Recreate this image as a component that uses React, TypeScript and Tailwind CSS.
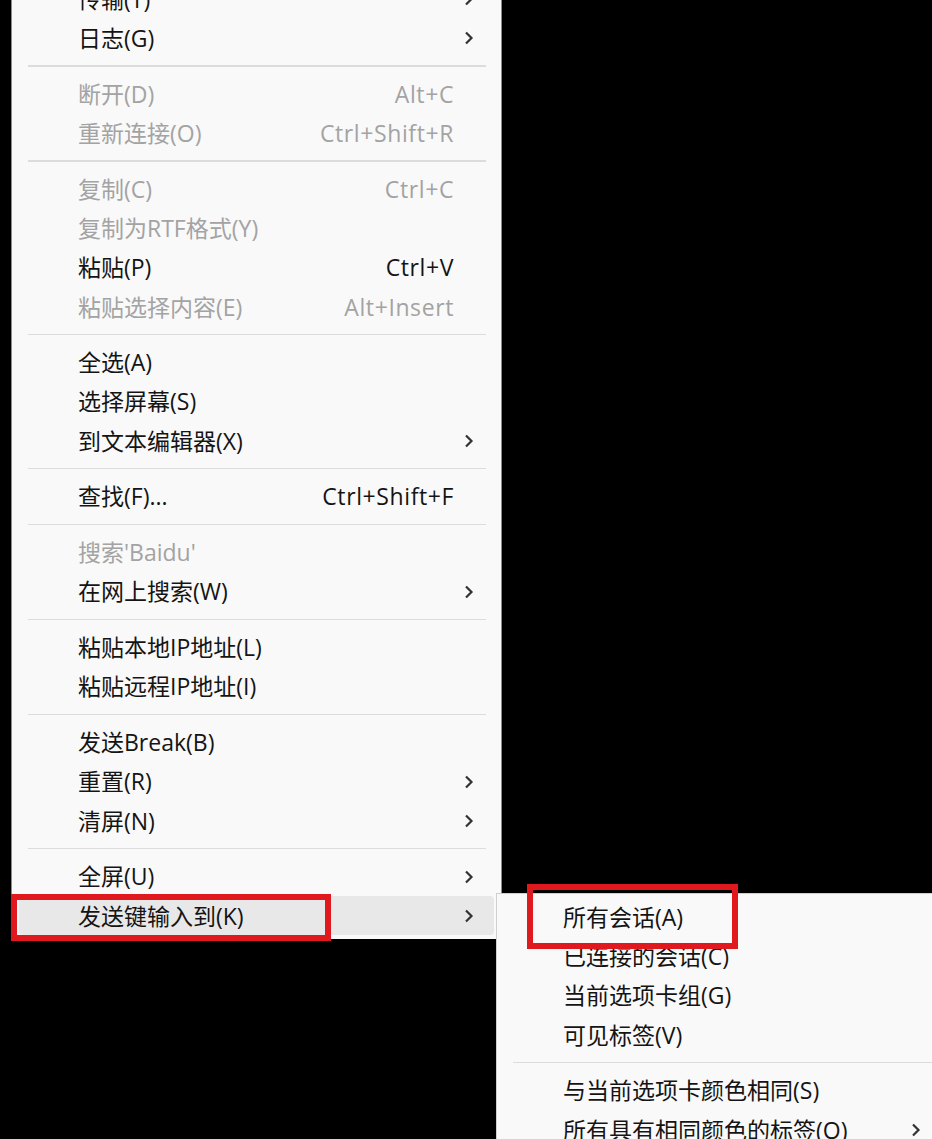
import React from "react";

type Item =
  | { sep: true }
  | { sep?: false; label: string; shortcut?: string; sub?: boolean; disabled?: boolean; active?: boolean };

const mainItems: Item[] = [
  { label: "传输(T)", sub: true },
  { label: "日志(G)", sub: true },
  { sep: true },
  { label: "断开(D)", shortcut: "Alt+C", disabled: true },
  { label: "重新连接(O)", shortcut: "Ctrl+Shift+R", disabled: true },
  { sep: true },
  { label: "复制(C)", shortcut: "Ctrl+C", disabled: true },
  { label: "复制为RTF格式(Y)", disabled: true },
  { label: "粘贴(P)", shortcut: "Ctrl+V" },
  { label: "粘贴选择内容(E)", shortcut: "Alt+Insert", disabled: true },
  { sep: true },
  { label: "全选(A)" },
  { label: "选择屏幕(S)" },
  { label: "到文本编辑器(X)", sub: true },
  { sep: true },
  { label: "查找(F)...", shortcut: "Ctrl+Shift+F" },
  { sep: true },
  { label: "搜索'Baidu'", disabled: true },
  { label: "在网上搜索(W)", sub: true },
  { sep: true },
  { label: "粘贴本地IP地址(L)" },
  { label: "粘贴远程IP地址(I)" },
  { sep: true },
  { label: "发送Break(B)" },
  { label: "重置(R)", sub: true },
  { label: "清屏(N)", sub: true },
  { sep: true },
  { label: "全屏(U)", sub: true },
  { label: "发送键输入到(K)", sub: true, active: true },
];

const subItems: Item[] = [
  { label: "所有会话(A)" },
  { label: "已连接的会话(C)" },
  { label: "当前选项卡组(G)" },
  { label: "可见标签(V)" },
  { sep: true },
  { label: "与当前选项卡颜色相同(S)" },
  { label: "所有具有相同颜色的标签(O)", sub: true },
];

function Chevron() {
  return (
    <svg width="10" height="14" viewBox="0 0 10 14" className="shrink-0">
      <polyline points="2,1.5 7.5,7 2,12.5" fill="none" stroke="#333" strokeWidth="2.2" />
    </svg>
  );
}

function MenuRows({ items }: { items: Item[] }) {
  return (
    <>
      {items.map((it, i) =>
        it.sep ? (
          <div key={i} className="h-[16.4px] flex items-center pl-[16px] pr-[15px]">
            <div className="h-[1.5px] w-full bg-[#dcdcdc]" />
          </div>
        ) : (
          <div
            key={i}
            className={`h-[39.3px] flex items-center mx-[7px] pl-[59px] pr-[20px] pt-[1px] rounded-[4px] ${
              it.active ? "bg-[#e8e8e8]" : ""
            } ${it.disabled ? "text-[#a3a3a3]" : "text-[#141414]"}`}
          >
            <span className="flex-1 whitespace-nowrap">{it.label}</span>
            {it.shortcut && <span className="whitespace-nowrap mr-[20px] tracking-[0.6px]">{it.shortcut}</span>}
            {it.sub && <Chevron />}
          </div>
        )
      )}
    </>
  );
}

export default function App() {
  return (
    <div
      className="relative w-[932px] h-[1139px] overflow-hidden bg-black text-[23px] leading-none"
      style={{ fontFamily: '"Open Sans", "Noto Sans CJK SC", sans-serif' }}
    >
      <div className="ml-[11px] w-[491px] -mt-[21px] pb-[4px] bg-[#f9f9f9] border-r border-l border-[#8c8c8c]">
        <MenuRows items={mainItems} />
      </div>

      {/* submenu overlaps the main menu */}
      <div className="absolute left-[496px] top-[893px] w-[452px] h-[300px] pt-[3px] bg-[#f9f9f9] border-l border-t border-[#cfcfcf]">
        <MenuRows items={subItems} />
      </div>

      {/* red annotation boxes */}
      <div className="absolute left-[11px] top-[894px] w-[320px] h-[47px] border-[6px] border-[#e0191e]" />
      <div className="absolute left-[527px] top-[884px] w-[211px] h-[65px] border-[6px] border-[#e0191e]" />
    </div>
  );
}
